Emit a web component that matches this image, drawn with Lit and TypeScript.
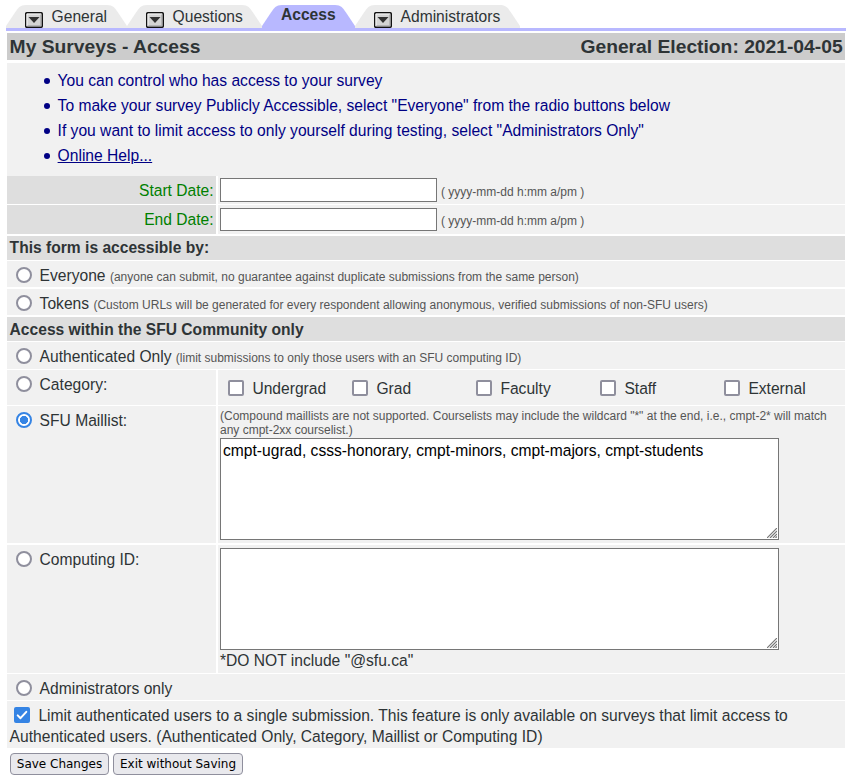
import { LitElement, html, css, svg } from "lit";
import { customElement, property } from "lit/decorators.js";

@customElement("survey-tab")
class SurveyTab extends LitElement {
  @property() label = "";
  @property({ type: Number }) width = 100;
  @property({ type: Boolean }) active = false;

  static styles = css`
    :host { display: block; flex: none; }
    .tab { position: relative; height: 23px; display: flex; align-items: flex-start; font-size: 15.6px; line-height: 18px; white-space: nowrap; color: #2e3436; }
    .shape { position: absolute; left: 0; top: 0; fill: #ebebeb; }
    .on .shape { fill: #b8b8ff; }
    .arrow { position: relative; margin: 7px 8.6px 0 19px; flex: none; }
    .label { position: relative; padding-top: 3px; }
    .on .label { font-weight: bold; padding: 1px 0 0 19px; }
  `;

  render() {
    const w = this.width;
    return html`<div class="tab ${this.active ? "on" : ""}" style="width:${w}px">
      <svg class="shape" width=${w} height="23">
        <path d="M0 23V21L9 7.5C12 3 14 0 20 0H${w - 20}C${w - 14} 0 ${w - 12} 3 ${w - 9} 7.5L${w} 21V23Z" />
      </svg>
      ${this.active ? "" : html`<svg class="arrow" width="18" height="16" viewBox="0 0 18 16">
        <rect x=".7" y=".7" width="16.6" height="14.6" rx="1" fill="#d4d4d4" stroke="#111" stroke-width="1.4" />
        <path d="M2 14V2H16" fill="none" stroke="#f5f5f5" />
        <path d="M2.5 13.8H15.8V2.5" fill="none" stroke="#aaa" />
        <path d="M3.5 5H14.5L9 11Z" fill="#333" />
      </svg>`}
      <span class="label">${this.label}</span>
    </div>`;
  }
}

@customElement("app-root")
class AppRoot extends LitElement {
  static styles = css`
    :host { display: block; box-sizing: border-box; height: 782px; padding: 5px 5px 0 6px; background: #fff; color: #2e3436; font: 15.62px/18px "Liberation Sans", Arial, sans-serif; }
    * { box-sizing: border-box; }
    .tabs { display: flex; height: 26px; border-bottom: 3px solid #b8b8ff; }
    .form { display: grid; grid-template-columns: 209px 627px; column-gap: 2px; padding: 2px 1px 0; grid-template-rows: 30px 113px 29px 31px 25px 28px 28px 25px 28px 36px 139px 129px 27px 47px; }
    .cell { background: #f1f1f1; min-width: 0; white-space: nowrap; }
    .wide { grid-column: 1 / 3; }
    .g1 { margin-bottom: 1px; }
    .g2 { margin-bottom: 2px; }
    .title { display: flex; justify-content: space-between; margin-bottom: 3px; padding: 3px 2.4px 0 2.6px; background: #ccc; font-size: 19.25px; line-height: 22px; font-weight: bold; }
    .tips { margin: 0; padding: 5px 0 0 50.6px; list-style: none; color: #000084; line-height: 25px; }
    .tips li { display: flex; align-items: center; }
    .tips li::before { content: ""; flex: none; width: 6px; height: 6px; border-radius: 50%; background: #000084; margin: 1px 8px 0 -14px; }
    .tips a { color: #000084; text-decoration: underline; }
    .name { background: #dedede; color: #008000; text-align: right; padding: 6px 2.4px 0 0; }
    .date { display: flex; padding: 2px 2px 0; }
    .date.end { padding-top: 3px; }
    .date input { appearance: none; width: 217px; height: 24px; border: 1px solid #767676; border-radius: 0; background: #fff; padding: 1px 2px; margin: 0; outline: 0; font: inherit; }
    .date.end input { height: 23px; }
    .small { font-size: 12px; line-height: 14px; color: #555; }
    .date .small { padding: 7px 0 0 4px; }
    .date.end .small { padding-top: 6px; }
    .head { background: #dedede; font-weight: bold; padding: 3px 2.6px 0; }
    .low { padding-top: 4px; }
    .opt { display: flex; align-items: flex-start; padding: 6px 0 0 9px; }
    .opt .text { margin-left: 7.6px; }
    .radio, .check { appearance: none; flex: none; width: 16px; height: 16px; margin: 0; background: #fff; border: 2px solid #8f8f9d; }
    .radio { border-radius: 50%; }
    .radio:checked { border-color: #3584e4; background: radial-gradient(circle, #3584e4 3.8px, #fff 4.4px); }
    .check { border-radius: 2px; }
    .cats { display: grid; grid-template-columns: repeat(5, 124px); padding: 10px 0 0 10px; }
    .cats label { display: flex; }
    .cats span { margin-left: 8.4px; }
    .lists { padding: 3px 2px 0; }
    .lists .small { height: 29px; }
    .box { position: relative; width: 559px; height: 102px; }
    .box textarea { display: block; width: 559px; height: 102px; resize: none; margin: 0; padding: 3px 2px 2px; border: 1px solid #767676; border-radius: 0; background: #fff; color: #000; font: inherit; outline: 0; overflow: hidden; }
    .grip { position: absolute; right: 2px; bottom: 2px; stroke: #777; stroke-width: 1.2; }
    .note { padding-top: 2px; }
    .limit { padding: 4px 2.6px 0; line-height: 21px; }
    .line { display: flex; }
    .tick { flex: none; margin: 2px 8.4px 0 4.4px; }
    .actions { display: flex; gap: 4px; padding: 5px 0 0 4px; }
    .actions button { height: 22px; padding: 0; border: 1px solid #8f8f9d; border-radius: 4px; background: #e9e9ed; color: #000; font: 12px/18px "DejaVu Sans", sans-serif; white-space: nowrap; }
    .save { width: 99px; }
    .exit { width: 130px; }
  `;

  private radio(label: string, note = "", checked = false) {
    return html`<input class="radio" type="radio" name="access" .checked=${checked} /><span class="text">${label}${note ? html` <span class="small">${note}</span>` : ""}</span>`;
  }

  private area(value: string) {
    return html`<div class="box"><textarea spellcheck="false" .value=${value}></textarea>
      ${svg`<svg class="grip" width="10" height="10" viewBox="0 0 10 10"><path d="M0 10L10 0M3 10L10 3M6 10L10 6M8.5 10L10 8.5" fill="none"/></svg>`}</div>`;
  }

  render() {
    return html`
      <nav class="tabs">
        <survey-tab label="General" width="121"></survey-tab>
        <survey-tab label="Questions" width="135"></survey-tab>
        <survey-tab label="Access" width="93" active></survey-tab>
        <survey-tab label="Administrators" width="165"></survey-tab>
      </nav>
      <main class="form">
        <div class="cell wide title"><span>My Surveys - Access</span><span>General Election: 2021-04-05</span></div>
        <ul class="cell wide tips g2">
          <li>You can control who has access to your survey</li>
          <li>To make your survey Publicly Accessible, select "Everyone" from the radio buttons below</li>
          <li>If you want to limit access to only yourself during testing, select "Administrators Only"</li>
          <li><a href="#">Online Help...</a></li>
        </ul>
        <div class="cell name g1">Start Date:</div>
        <div class="cell date g1"><input /><span class="small">( yyyy-mm-dd h:mm a/pm )</span></div>
        <div class="cell name g2">End Date:</div>
        <div class="cell date end g2"><input /><span class="small">( yyyy-mm-dd h:mm a/pm )</span></div>
        <div class="cell wide head g1">This form is accessible by:</div>
        <div class="cell wide opt g2">${this.radio("Everyone", "(anyone can submit, no guarantee against duplicate submissions from the same person)")}</div>
        <div class="cell wide opt g2">${this.radio("Tokens", "(Custom URLs will be generated for every respondent allowing anonymous, verified submissions of non-SFU users)")}</div>
        <div class="cell wide head low g1">Access within the SFU Community only</div>
        <div class="cell wide opt g1">${this.radio("Authenticated Only", "(limit submissions to only those users with an SFU computing ID)")}</div>
        <div class="cell opt g1">${this.radio("Category:")}</div>
        <div class="cell cats g1">
          ${["Undergrad", "Grad", "Faculty", "Staff", "External"].map((c) => html`<label><input class="check" type="checkbox" /><span>${c}</span></label>`)}
        </div>
        <div class="cell opt g2">${this.radio("SFU Maillist:", "", true)}</div>
        <div class="cell lists g2">
          <div class="small">(Compound maillists are not supported. Courselists may include the wildcard "*" at the end, i.e., cmpt-2* will match<br />any cmpt-2xx courselist.)</div>
          ${this.area("cmpt-ugrad, csss-honorary, cmpt-minors, cmpt-majors, cmpt-students")}
        </div>
        <div class="cell opt g1">${this.radio("Computing ID:")}</div>
        <div class="cell lists g1">${this.area("")}<div class="note">*DO NOT include "@sfu.ca"</div></div>
        <div class="cell wide opt g1">${this.radio("Administrators only")}</div>
        <div class="cell wide limit">
          <div class="line"><svg class="tick" width="16" height="16" viewBox="0 0 16 16"><rect width="16" height="16" rx="2" fill="#3584e4" /><path d="M3.7 8.4L6.5 11.2L12.3 4.8" fill="none" stroke="#fff" stroke-width="2" stroke-linecap="round" stroke-linejoin="round" /></svg><span>Limit authenticated users to a single submission. This feature is only available on surveys that limit access to</span></div>
          <div>Authenticated users. (Authenticated Only, Category, Maillist or Computing ID)</div>
        </div>
      </main>
      <div class="actions"><button class="save">Save Changes</button><button class="exit">Exit without Saving</button></div>
    `;
  }
}
